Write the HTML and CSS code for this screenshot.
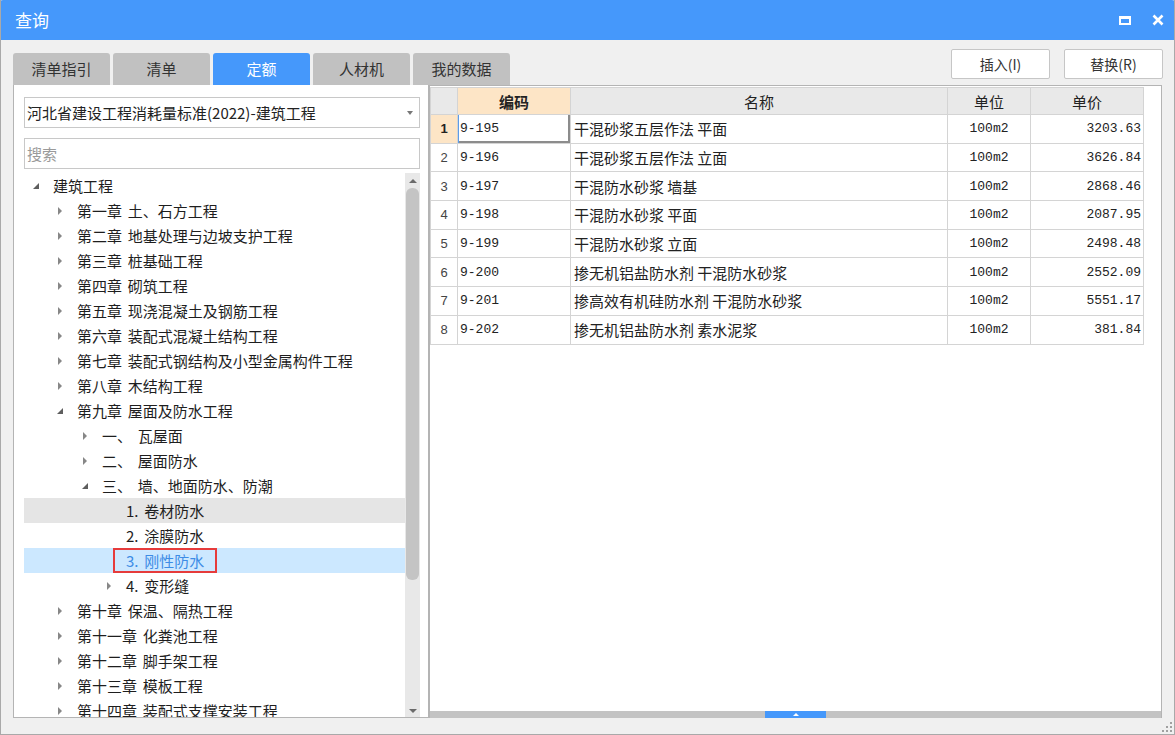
FILE: index.html
```html
<!DOCTYPE html>
<html lang="zh-CN">
<head>
<meta charset="utf-8">
<title>查询</title>
<link rel="stylesheet" href="styles.css">
</head>
<body>
<div class="window">
  <header class="titlebar">
    <span class="title">查询</span>
    <div class="win-ctrls">
      <span class="max-icon"></span>
      <svg class="close-icon" width="12" height="12" viewBox="0 0 12 12"><path d="M1.5 1.5 L10.5 10.5 M10.5 1.5 L1.5 10.5" stroke="#fff" stroke-width="2.6" fill="none"/></svg>
    </div>
  </header>

  <div class="toolbar">
    <div class="tabs">
      <div class="tab">清单指引</div>
      <div class="tab">清单</div>
      <div class="tab active">定额</div>
      <div class="tab">人材机</div>
      <div class="tab">我的数据</div>
    </div>
    <div class="actions">
      <button class="btn">插入(I)</button>
      <button class="btn">替换(R)</button>
    </div>
  </div>

  <div class="main">
    <aside class="left">
      <div class="select">
        <span class="select-text">河北省建设工程消耗量标准(2022)-建筑工程</span>
        <span class="caret"></span>
      </div>
      <div class="search">搜索</div>
      <div class="tree-wrap">
        <div class="tree">
          <div class="row lv0"><span class="tog"><i class="open"></i></span><span class="txt">建筑工程</span></div>
          <div class="row lv1"><span class="tog"><i class="closed"></i></span><span class="txt">第一章 土、石方工程</span></div>
          <div class="row lv1"><span class="tog"><i class="closed"></i></span><span class="txt">第二章 地基处理与边坡支护工程</span></div>
          <div class="row lv1"><span class="tog"><i class="closed"></i></span><span class="txt">第三章 桩基础工程</span></div>
          <div class="row lv1"><span class="tog"><i class="closed"></i></span><span class="txt">第四章 砌筑工程</span></div>
          <div class="row lv1"><span class="tog"><i class="closed"></i></span><span class="txt">第五章 现浇混凝土及钢筋工程</span></div>
          <div class="row lv1"><span class="tog"><i class="closed"></i></span><span class="txt">第六章 装配式混凝土结构工程</span></div>
          <div class="row lv1"><span class="tog"><i class="closed"></i></span><span class="txt">第七章 装配式钢结构及小型金属构件工程</span></div>
          <div class="row lv1"><span class="tog"><i class="closed"></i></span><span class="txt">第八章 木结构工程</span></div>
          <div class="row lv1"><span class="tog"><i class="open"></i></span><span class="txt">第九章 屋面及防水工程</span></div>
          <div class="row lv2"><span class="tog"><i class="closed"></i></span><span class="txt">一、 瓦屋面</span></div>
          <div class="row lv2"><span class="tog"><i class="closed"></i></span><span class="txt">二、 屋面防水</span></div>
          <div class="row lv2"><span class="tog"><i class="open"></i></span><span class="txt">三、 墙、地面防水、防潮</span></div>
          <div class="row lv3 hover"><span class="tog"></span><span class="txt">1. 卷材防水</span></div>
          <div class="row lv3"><span class="tog"></span><span class="txt">2. 涂膜防水</span></div>
          <div class="row lv3 selected"><span class="tog"></span><span class="txt marked">3. 刚性防水</span></div>
          <div class="row lv3"><span class="tog"><i class="closed"></i></span><span class="txt">4. 变形缝</span></div>
          <div class="row lv1"><span class="tog"><i class="closed"></i></span><span class="txt">第十章 保温、隔热工程</span></div>
          <div class="row lv1"><span class="tog"><i class="closed"></i></span><span class="txt">第十一章 化粪池工程</span></div>
          <div class="row lv1"><span class="tog"><i class="closed"></i></span><span class="txt">第十二章 脚手架工程</span></div>
          <div class="row lv1"><span class="tog"><i class="closed"></i></span><span class="txt">第十三章 模板工程</span></div>
          <div class="row lv1"><span class="tog"><i class="closed"></i></span><span class="txt">第十四章 装配式支撑安装工程</span></div>
        </div>
        <div class="vscroll">
          <span class="arr up"></span>
          <div class="thumb"></div>
          <div class="vspace"></div>
          <span class="arr down"></span>
        </div>
      </div>
    </aside>

    <section class="right">
      <div class="grid-area">
        <table class="grid">
          <colgroup>
            <col class="c-no"><col class="c-code"><col class="c-name"><col class="c-unit"><col class="c-price">
          </colgroup>
          <thead>
            <tr><th></th><th class="h-code">编码</th><th>名称</th><th>单位</th><th>单价</th></tr>
          </thead>
          <tbody>
            <tr><td class="no cur">1</td><td class="code focus">9-195</td><td class="name">干混砂浆五层作法 平面</td><td class="unit">100m2</td><td class="price">3203.63</td></tr>
            <tr><td class="no">2</td><td class="code">9-196</td><td class="name">干混砂浆五层作法 立面</td><td class="unit">100m2</td><td class="price">3626.84</td></tr>
            <tr><td class="no">3</td><td class="code">9-197</td><td class="name">干混防水砂浆 墙基</td><td class="unit">100m2</td><td class="price">2868.46</td></tr>
            <tr><td class="no">4</td><td class="code">9-198</td><td class="name">干混防水砂浆 平面</td><td class="unit">100m2</td><td class="price">2087.95</td></tr>
            <tr><td class="no">5</td><td class="code">9-199</td><td class="name">干混防水砂浆 立面</td><td class="unit">100m2</td><td class="price">2498.48</td></tr>
            <tr><td class="no">6</td><td class="code">9-200</td><td class="name">掺无机铝盐防水剂 干混防水砂浆</td><td class="unit">100m2</td><td class="price">2552.09</td></tr>
            <tr><td class="no">7</td><td class="code">9-201</td><td class="name">掺高效有机硅防水剂 干混防水砂浆</td><td class="unit">100m2</td><td class="price">5551.17</td></tr>
            <tr><td class="no">8</td><td class="code">9-202</td><td class="name">掺无机铝盐防水剂 素水泥浆</td><td class="unit">100m2</td><td class="price">381.84</td></tr>
          </tbody>
        </table>
      </div>
      <div class="hbar"><span class="handle"><i></i></span></div>
    </section>
  </div>

  <div class="statusbar">
    <svg class="grip" width="10" height="10" viewBox="0 0 10 10">
      <rect x="8" y="0" width="2" height="2" fill="#a0a0a0"/>
      <rect x="4" y="4" width="2" height="2" fill="#a0a0a0"/>
      <rect x="8" y="4" width="2" height="2" fill="#a0a0a0"/>
      <rect x="0" y="8" width="2" height="2" fill="#a0a0a0"/>
      <rect x="4" y="8" width="2" height="2" fill="#a0a0a0"/>
      <rect x="8" y="8" width="2" height="2" fill="#a0a0a0"/>
    </svg>
  </div>
</div>
</body>
</html>
```
FILE: styles.css
```css
* { box-sizing: border-box; }
html, body { margin: 0; padding: 0; }
body {
  font-family: "Noto Sans CJK SC", "Microsoft YaHei", sans-serif;
  color: #222;
  background: #fff;
}
.window {
  width: 1175px;
  height: 735px;
  background: #f0f0f0;
  border: 1px solid #a9a9a9;
  border-top: none;
  display: flex;
  flex-direction: column;
  overflow: hidden;
}

/* title bar */
.titlebar {
  height: 40px;
  flex: none;
  background: #4598fb;
  color: #fff;
  display: flex;
  align-items: center;
  justify-content: space-between;
  padding: 0 11px 0 15px;
  margin: 0 -1px;
  border-radius: 3px 3px 0 0;
}
.title { font-size: 17px; line-height: 20px; }
.win-ctrls { display: flex; align-items: center; gap: 21px; }
.max-icon {
  width: 12px; height: 9px;
  border: 2px solid #fff;
  border-top-width: 3px;
  display: block;
}
.close-icon { display: block; }

/* toolbar */
.toolbar {
  height: 45px;
  flex: none;
  display: flex;
  justify-content: space-between;
  padding: 0 11px 0 12px;
}
.tabs { display: flex; gap: 3px; align-self: flex-end; }
.tab {
  width: 97px;
  height: 32px;
  background: #c1c1c1;
  border-radius: 3px 3px 0 0;
  font-size: 15px;
  line-height: 32px;
  text-align: center;
  color: #333;
}
.tab.active { background: #4598fb; color: #fff; }
.actions { display: flex; gap: 14px; padding-top: 9px; }
.btn {
  width: 99px;
  height: 30px;
  background: #fff;
  border: 1px solid #c6c6c6;
  border-radius: 2px;
  font-family: inherit;
  font-size: 14px;
  color: #333;
  padding: 0;
}

/* main */
.main {
  height: 633px;
  flex: none;
  display: flex;
  padding-left: 12px;
}
.left {
  width: 416px;
  height: 633px;
  flex: none;
  background: #fff;
  border: 1px solid #b4b4b4;
  border-top: none;
  padding: 12px 8px 0 10px;
  display: flex;
  flex-direction: column;
}
.select {
  height: 31px;
  flex: none;
  border: 1px solid #c8c8c8;
  display: flex;
  align-items: center;
  justify-content: space-between;
  padding: 0 6px 0 2px;
  font-size: 15px;
  color: #222;
}
.caret {
  width: 0; height: 0;
  border-left: 3.5px solid transparent;
  border-right: 3.5px solid transparent;
  border-top: 4px solid #777;
}
.search {
  height: 31px;
  flex: none;
  margin-top: 10px;
  border: 1px solid #c8c8c8;
  font-size: 15px;
  line-height: 29px;
  padding-left: 2px;
  color: #9a9a9a;
}
.tree-wrap {
  margin-top: 4px;
  flex: 1;
  min-height: 0;
  display: flex;
}
.tree {
  flex: 1;
  overflow: hidden;
  word-spacing: 2.5px;
}
.row {
  height: 25px;
  display: flex;
  align-items: center;
  font-size: 15px;
  line-height: 25px;
  white-space: nowrap;
  color: #1e1e1e;
}
.row.lv0 { padding-left: 1px; }
.row.lv1 { padding-left: 25px; }
.row.lv2 { padding-left: 50px; }
.row.lv3 { padding-left: 74px; }
.row.hover { background: #e5e5e5; }
.row.selected { background: #cce8ff; }
.row.selected .txt { color: #3d8ce6; }
.tog {
  width: 28px;
  flex: none;
  display: flex;
  align-items: center;
  padding-left: 8px;
  height: 25px;
}
.tog i { display: block; width: 0; height: 0; }
.tog i.closed {
  border-left: 4px solid #878787;
  border-top: 4px solid transparent;
  border-bottom: 4px solid transparent;
  margin-left: 1px;
}
.tog i.open {
  border-bottom: 6px solid #5e5e5e;
  border-left: 6px solid transparent;
}
.txt.marked {
  border: 2px solid #e63b3b;
  line-height: 21px;
  height: 25px;
  padding: 0 11px 0 11px;
  margin-left: -13px;
}

.vscroll {
  width: 15px;
  flex: none;
  background: #e8e8e8;
  display: flex;
  flex-direction: column;
  align-items: center;
  padding: 0 1px;
}
.arr { display: block; width: 0; height: 0; flex: none; }
.arr.up {
  margin-top: 6px;
  border-left: 4px solid transparent;
  border-right: 4px solid transparent;
  border-bottom: 4px solid #6a6a6a;
}
.arr.down {
  margin-bottom: 4px;
  border-left: 4px solid transparent;
  border-right: 4px solid transparent;
  border-top: 4px solid #6a6a6a;
}
.thumb {
  margin-top: 5px;
  width: 13px;
  height: 392px;
  background: #c4c4c4;
  border-radius: 6px;
  flex: none;
}
.vspace { flex: 1; }

/* right grid */
.right {
  width: 733px;
  flex: none;
  background: #fff;
  border: 1px solid #b4b4b4;
  border-bottom: none;
  display: flex;
  flex-direction: column;
}
.grid-area { flex: 1; min-height: 0; padding-top: 1px; }
.grid {
  border-collapse: collapse;
  table-layout: fixed;
  width: 713px;
}
.c-no { width: 27px; }
.c-code { width: 113px; }
.c-name { width: 377px; }
.c-unit { width: 83px; }
.c-price { width: 113px; }
.grid th, .grid td {
  border: 1px solid #d4d4d4;
  padding: 0;
  overflow: hidden;
  white-space: nowrap;
}
.grid th {
  height: 27px;
  background: #e9e9e9;
  font-weight: normal;
  font-size: 15px;
  color: #222;
  text-align: center;
}
.grid th.h-code { background: #fde5c6; font-weight: bold; }
.grid td { height: 28.7px; font-size: 15px; }
.grid td.no {
  text-align: center;
  font-family: "Liberation Sans", sans-serif;
  font-size: 13px;
  color: #444;
}
.grid td.no.cur { background: #fde5c6; color: #222; font-weight: bold; }
.grid td.code {
  font-family: "Liberation Mono", monospace;
  font-size: 13px;
  padding-left: 2px;
}
.grid td.code.focus {
  box-shadow: inset 1px 0 0 #5d9ce8, inset -2px -2px 0 #8c8c8c;
}
.grid td.name { padding-left: 3px; }
.grid td.unit {
  text-align: center;
  font-family: "Liberation Mono", monospace;
  font-size: 13px;
}
.grid td.price {
  text-align: right;
  padding-right: 2px;
  font-family: "Liberation Mono", monospace;
  font-size: 13px;
}
.hbar {
  height: 7px;
  flex: none;
  background: #c3c3c3;
  padding-left: 335px;
  display: flex;
}
.handle {
  width: 61px;
  height: 7px;
  background: #4598fb;
  display: flex;
  justify-content: center;
  align-items: center;
}
.handle i {
  display: block;
  width: 0; height: 0;
  border-left: 3px solid transparent;
  border-right: 3px solid transparent;
  border-bottom: 3px solid #fff;
}

.statusbar {
  flex: 1;
  display: flex;
  justify-content: flex-end;
  align-items: flex-end;
  padding: 0 2px 2px 0;
}
.grip { display: block; }
```
